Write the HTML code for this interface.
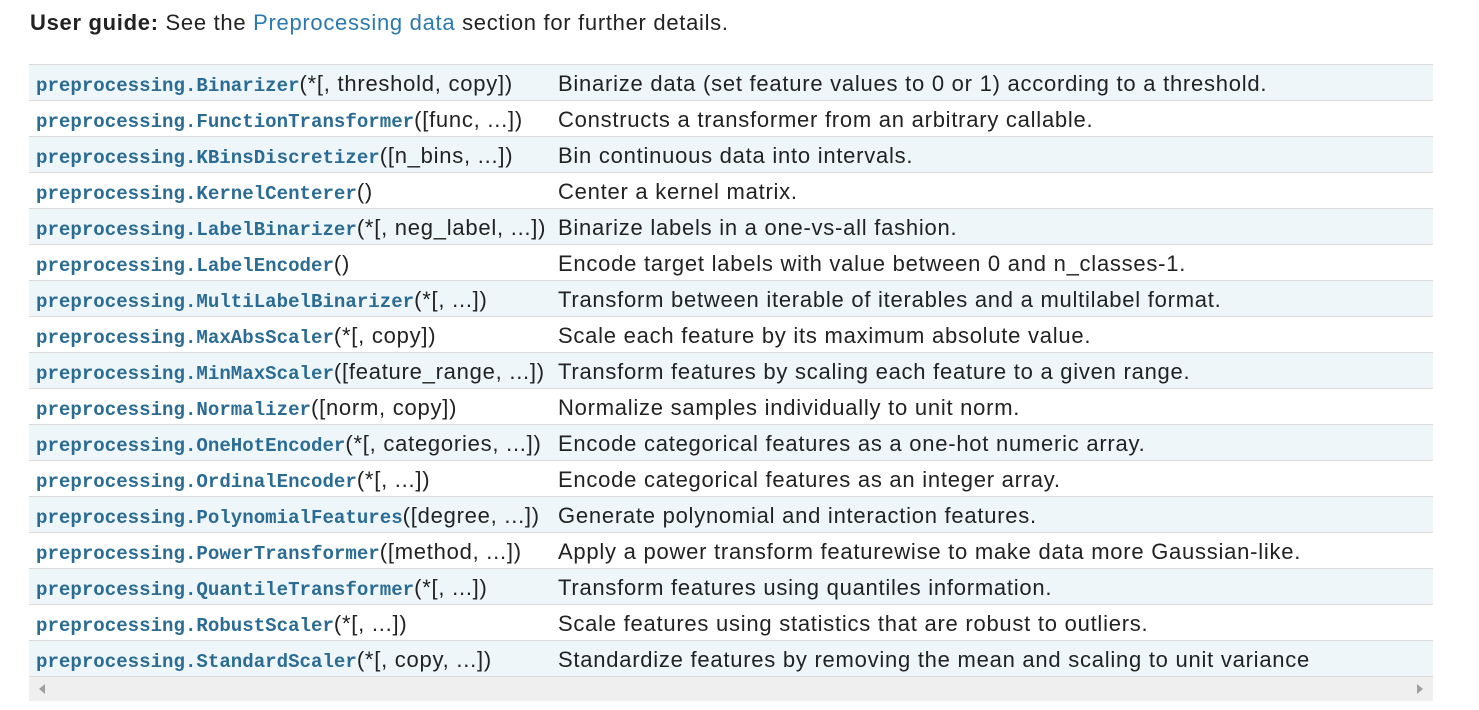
<!DOCTYPE html>
<html><head><meta charset="utf-8"><style>
html,body{margin:0;padding:0;background:#fff;width:1479px;height:710px;overflow:hidden}
body{font-family:"Liberation Sans",sans-serif;color:#222}
.ug{position:absolute;left:30px;top:10px;font-size:22px;white-space:nowrap;letter-spacing:0.7px}
.ug a{color:#2a7ab0;text-decoration:none}
table{position:absolute;left:29px;top:64px;width:1404px;border-collapse:collapse}
td{height:36px;border-top:1px solid #dcdcdc;padding:3px 0 0 0;box-sizing:border-box;white-space:nowrap;font-size:22px;letter-spacing:0.75px;vertical-align:middle}
tr:nth-child(odd){background:#eef6fa}
td.c1{padding-left:7px;width:529px}
code{font-family:"Liberation Mono",monospace;font-weight:bold;color:#2b6c95;font-size:19.1px;letter-spacing:0}
tr:last-child td{border-bottom:1px solid #dcdcdc}
.sb{position:absolute;left:29px;top:677px;width:1404px;height:24px;background:#efefef}
.la{position:absolute;left:10px;top:7px;width:0;height:0;border-top:5px solid transparent;border-bottom:5px solid transparent;border-right:6px solid #a0a0a0}
.ra{position:absolute;right:10px;top:7px;width:0;height:0;border-top:5px solid transparent;border-bottom:5px solid transparent;border-left:6px solid #a0a0a0}
</style></head><body>
<div class="ug"><b>User guide:</b> See the <a>Preprocessing data</a> section for further details.</div>
<table>
<tr><td class="c1"><code>preprocessing.Binarizer</code>(*[, threshold, copy])</td><td>Binarize data (set feature values to 0 or 1) according to a threshold.</td></tr>
<tr><td class="c1"><code>preprocessing.FunctionTransformer</code>([func, ...])</td><td>Constructs a transformer from an arbitrary callable.</td></tr>
<tr><td class="c1"><code>preprocessing.KBinsDiscretizer</code>([n_bins, ...])</td><td>Bin continuous data into intervals.</td></tr>
<tr><td class="c1"><code>preprocessing.KernelCenterer</code>()</td><td>Center a kernel matrix.</td></tr>
<tr><td class="c1"><code>preprocessing.LabelBinarizer</code>(*[, neg_label, ...])</td><td>Binarize labels in a one-vs-all fashion.</td></tr>
<tr><td class="c1"><code>preprocessing.LabelEncoder</code>()</td><td>Encode target labels with value between 0 and n_classes-1.</td></tr>
<tr><td class="c1"><code>preprocessing.MultiLabelBinarizer</code>(*[, ...])</td><td>Transform between iterable of iterables and a multilabel format.</td></tr>
<tr><td class="c1"><code>preprocessing.MaxAbsScaler</code>(*[, copy])</td><td>Scale each feature by its maximum absolute value.</td></tr>
<tr><td class="c1"><code>preprocessing.MinMaxScaler</code>([feature_range, ...])</td><td>Transform features by scaling each feature to a given range.</td></tr>
<tr><td class="c1"><code>preprocessing.Normalizer</code>([norm, copy])</td><td>Normalize samples individually to unit norm.</td></tr>
<tr><td class="c1"><code>preprocessing.OneHotEncoder</code>(*[, categories, ...])</td><td>Encode categorical features as a one-hot numeric array.</td></tr>
<tr><td class="c1"><code>preprocessing.OrdinalEncoder</code>(*[, ...])</td><td>Encode categorical features as an integer array.</td></tr>
<tr><td class="c1"><code>preprocessing.PolynomialFeatures</code>([degree, ...])</td><td>Generate polynomial and interaction features.</td></tr>
<tr><td class="c1"><code>preprocessing.PowerTransformer</code>([method, ...])</td><td>Apply a power transform featurewise to make data more Gaussian-like.</td></tr>
<tr><td class="c1"><code>preprocessing.QuantileTransformer</code>(*[, ...])</td><td>Transform features using quantiles information.</td></tr>
<tr><td class="c1"><code>preprocessing.RobustScaler</code>(*[, ...])</td><td>Scale features using statistics that are robust to outliers.</td></tr>
<tr><td class="c1"><code>preprocessing.StandardScaler</code>(*[, copy, ...])</td><td>Standardize features by removing the mean and scaling to unit variance</td></tr>
</table>
<div class="sb"><div class="la"></div><div class="ra"></div></div>
</body></html>
